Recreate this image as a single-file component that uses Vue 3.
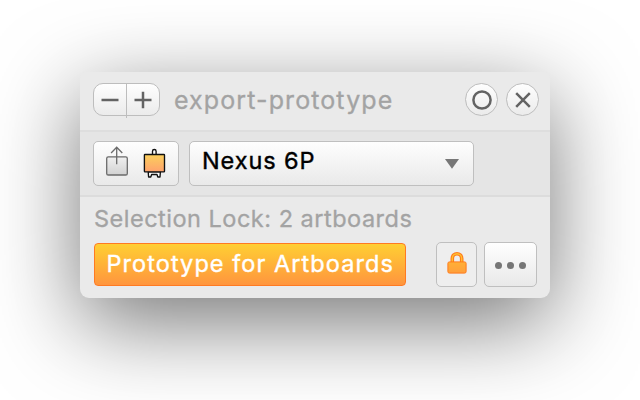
<script setup>
const title = 'export-prototype'
const device = 'Nexus 6P'
const status = 'Selection Lock: 2 artboards'
const action = 'Prototype for Artboards'
</script>

<template>
  <main class="stage">
    <section class="panel">
      <header class="row header">
        <div class="stepper">
          <button class="step" aria-label="Remove">
            <svg width="20" height="20" viewBox="0 0 20 20"><path d="M1.5 10h17" /></svg>
          </button>
          <button class="step plus" aria-label="Add">
            <svg width="20" height="20" viewBox="0 0 20 20"><path d="M1.5 10h17M10 1.7v16.6" /></svg>
          </button>
        </div>
        <h1 class="title"><span>{{ title }}</span></h1>
        <div class="rounds">
          <button class="round" aria-label="Record">
            <svg width="22" height="22" viewBox="0 0 22 22"><circle cx="11" cy="11" r="8.6" /></svg>
          </button>
          <button class="round" aria-label="Close">
            <svg width="22" height="22" viewBox="0 0 22 22"><path d="M4.2 4.2l13.6 13.6M17.8 4.2L4.2 17.8" /></svg>
          </button>
        </div>
      </header>

      <div class="row tools">
        <button class="control export" aria-label="Export">
          <svg width="84" height="43" viewBox="0 0 84 43">
            <defs>
              <linearGradient id="grey" x1="0" y1="0" x2="0" y2="1">
                <stop offset="0" stop-color="#f0f0f0" />
                <stop offset="1" stop-color="#d2d2d2" />
              </linearGradient>
              <linearGradient id="board" x1="0" y1="0" x2="0" y2="1">
                <stop offset="0" stop-color="#fbd05c" />
                <stop offset="1" stop-color="#ffa26d" />
              </linearGradient>
            </defs>
            <g stroke="#6b6b6b" stroke-width="1.3" fill="none">
              <rect x="12.7" y="14.8" width="20.6" height="18.2" rx="1.6" fill="url(#grey)" />
              <path d="M22.7 22.3V5.5M17.1 11l5.6-5.8 5.6 5.8" />
            </g>
            <g stroke="#111" stroke-width="1.35" fill="none">
              <path d="M58.5 12V9.3a1.8 1.8 0 0 1 3.6 0V12" fill="#fff" />
              <path d="M54.2 29.8l.4 5.2h2.2l.8-2.5h5.4l.8 2.5h2.2l.4-5.2z" fill="#fff" stroke-linejoin="round" />
              <rect x="50.4" y="12.5" width="20.1" height="17.3" rx=".6" fill="url(#board)" />
            </g>
          </svg>
        </button>
        <button class="control select">
          <span class="device">{{ device }}</span>
          <svg class="caret" width="14" height="10" viewBox="0 0 14 10"><path d="M0 0h14L7 9.7z" /></svg>
        </button>
      </div>

      <footer class="footer">
        <p class="status"><span>{{ status }}</span></p>
        <div class="actions">
          <button class="primary"><span>{{ action }}</span></button>
          <button class="control lock" aria-label="Lock">
            <svg width="22" height="26" viewBox="0 0 22 26">
              <defs>
                <linearGradient id="amber" x1="0" y1="0" x2="0" y2="1">
                  <stop offset="0" stop-color="#ffb036" />
                  <stop offset="1" stop-color="#ff9f3c" />
                </linearGradient>
              </defs>
              <path d="M6.3 12V8.4a4.7 4.7 0 0 1 9.4 0V12" fill="none" stroke="#ff7a1c" stroke-width="3.6" />
              <path d="M6.3 12V8.4a4.7 4.7 0 0 1 9.4 0V12" fill="none" stroke="#ffc02e" stroke-width="1.4" />
              <rect x="1.9" y="11.9" width="18.2" height="11.2" rx="1.5" fill="url(#amber)" stroke="#ff7a1c" />
            </svg>
          </button>
          <button class="control more" aria-label="More">
            <i class="dot"></i><i class="dot"></i><i class="dot"></i>
          </button>
        </div>
      </footer>
    </section>
  </main>
</template>

<style>
body {
  background: #fff;
  overflow: hidden;
}
</style>

<style scoped>
* {
  box-sizing: border-box;
}
.stage {
  width: 640px;
  height: 400px;
  padding: 72px 90px 102px 80px;
  overflow: hidden;
  background: #fff;
  font-family: Inter, "Liberation Sans", sans-serif;
}
.panel {
  display: flex;
  flex-direction: column;
  width: 470px;
  height: 226px;
  border-radius: 6px 6px 9px 9px;
  background: #eaeaea;
  box-shadow: 0 25px 88px rgba(0, 0, 0, 0.54);
}
button {
  margin: 0;
  padding: 0;
  border: 0;
  font: inherit;
  background: none;
}
svg {
  display: block;
}
.row {
  display: flex;
  align-items: flex-start;
}
.header {
  height: 60px;
  padding: 11px 11px 0 13px;
  border-bottom: 2px solid #dedede;
}
.stepper {
  display: flex;
  width: 67px;
  height: 33px;
  border: 1.4px solid #bdbdbd;
  border-radius: 10px;
  background: linear-gradient(#fefefe, #ebebeb);
}
.step {
  display: flex;
  align-items: center;
  justify-content: center;
  width: 32px;
  height: 31px;
}
.plus {
  width: 34px;
  height: 34px;
  padding-bottom: 3px;
  border-left: 1px solid #bdbdbd;
}
.step svg,
.round svg {
  fill: none;
  stroke: #636363;
  stroke-width: 2.5;
}
.title {
  flex: 1;
  margin: 0 0 0 14px;
  font-size: 25px;
  font-weight: 400;
  line-height: 34px;
  letter-spacing: 1.1px;
  color: #a3a3a3;
  white-space: nowrap;
  -webkit-text-stroke: 0.3px #a3a3a3;
}
.rounds {
  display: flex;
  gap: 8px;
}
.round {
  display: flex;
  align-items: center;
  justify-content: center;
  width: 33px;
  height: 33px;
  border: 1px solid #bdbdbd;
  border-radius: 50%;
  background: linear-gradient(#fefefe, #ebebeb);
}
.control {
  border: 1.4px solid #bfbfbf;
  border-radius: 5px;
  background: linear-gradient(#fefefe, #e9e9e9);
}
.tools {
  gap: 10px;
  height: 65px;
  padding: 9px 13px 0;
  border-bottom: 2px solid #dcdcdc;
  background: #e5e5e5;
}
.export {
  width: 86px;
  height: 45px;
}
.select {
  display: flex;
  align-items: center;
  justify-content: space-between;
  width: 285px;
  height: 45px;
  padding: 0 14px 0 12px;
}
.device {
  padding-bottom: 5px;
  font-size: 23.5px;
  line-height: 30px;
  letter-spacing: 0.9px;
  color: #000;
  -webkit-text-stroke: 0.4px #000;
}
.caret {
  fill: #777;
}
.footer {
  padding: 7px 13px 0 14px;
}
.status {
  margin: 0;
  font-size: 23.5px;
  line-height: 30px;
  letter-spacing: 0.5px;
  color: #a3a3a3;
  white-space: nowrap;
  -webkit-text-stroke: 0.3px #a3a3a3;
}
.actions {
  display: flex;
  align-items: flex-start;
  padding-top: 9px;
}
.primary {
  width: 312px;
  height: 43px;
  margin-right: 30px;
  padding: 0 0 2px 11.5px;
  border: 1.4px solid #ff7a22;
  border-radius: 4px;
  background: linear-gradient(#ffcf33, #ff953e);
  font-size: 23.5px;
  line-height: 30px;
  letter-spacing: 1.06px;
  text-align: left;
  color: #fff;
  white-space: nowrap;
  -webkit-text-stroke: 0.4px #fff;
}
.lock {
  display: flex;
  align-items: center;
  justify-content: center;
  width: 41px;
  height: 45px;
  margin: -1px 7px 0 0;
  background: #eee;
}
.lock svg {
  margin-bottom: 4px;
}
.more {
  display: flex;
  align-items: center;
  justify-content: center;
  gap: 5px;
  width: 53px;
  height: 45px;
  margin-top: -1px;
  padding-top: 2px;
}
.dot {
  width: 7px;
  height: 7px;
  border-radius: 50%;
  background: #767676;
}
</style>
